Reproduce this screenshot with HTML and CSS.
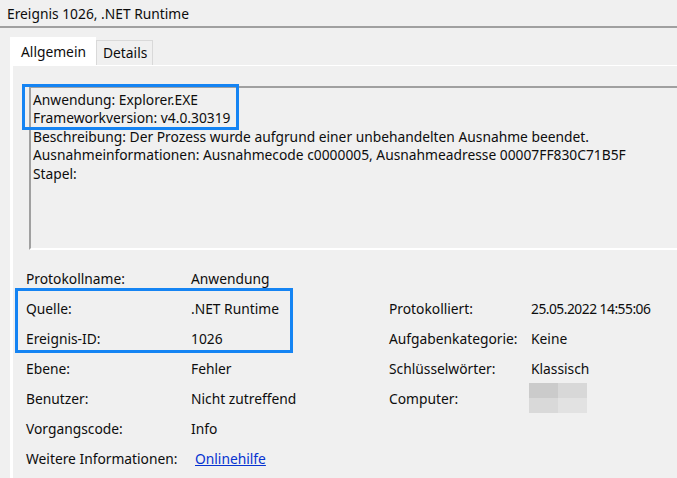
FILE: index.html
```html
<!DOCTYPE html>
<html lang="de">
<head>
  <meta charset="UTF-8">
  <title>Ereignis 1026, .NET Runtime</title>
  <link rel="stylesheet" href="styles.css">
</head>
<body>
  <div class="window">
    <div class="title">Ereignis 1026, .NET Runtime</div>

    <div class="tabs">
      <div class="tab active">Allgemein</div>
      <div class="tab">Details</div>
    </div>

    <div class="panel">
      <!-- Beschreibungsfeld -->
      <div class="desc">
        <div>Anwendung: Explorer.EXE</div>
        <div>Frameworkversion: v4.0.30319</div>
        <div>Beschreibung: Der Prozess wurde aufgrund einer unbehandelten Ausnahme beendet.</div>
        <div>Ausnahmeinformationen: Ausnahmecode c0000005, Ausnahmeadresse 00007FF830C71B5F</div>
        <div>Stapel:</div>
      </div>

      <!-- Eigenschaften -->
      <div class="props">
        <span>Protokollname:</span><span>Anwendung</span><span></span><span></span>
        <span>Quelle:</span><span>.NET Runtime</span><span>Protokolliert:</span><span class="date">25.05.2022 14:55:06</span>
        <span>Ereignis-ID:</span><span>1026</span><span>Aufgabenkategorie:</span><span>Keine</span>
        <span>Ebene:</span><span>Fehler</span><span>Schlüsselwörter:</span><span>Klassisch</span>
        <span>Benutzer:</span><span>Nicht zutreffend</span><span>Computer:</span>
        <span class="masked"><i></i><i></i><i></i><i></i></span>
        <span>Vorgangscode:</span><span>Info</span><span></span><span></span>
        <span>Weitere Informationen:</span><span><a href="#" class="link">Onlinehilfe</a></span><span></span><span></span>
      </div>
    </div>

    <!-- Markierungen -->
    <div class="mark mark-desc"></div>
    <div class="mark mark-src"></div>
  </div>
</body>
</html>
```

FILE: styles.css
```css
body { margin:0; background:#f0f0f0; overflow:hidden; }
.window { position:relative; width:677px; height:478px; overflow:hidden; font-family:"Noto Sans", sans-serif; font-size:13.8px; color:#0d0d0d; }

.title { height:26px; line-height:27px; padding-left:7px; border-bottom:2px solid #a0a0a0; }

.tabs { display:flex; align-items:flex-end; margin:9px 0 0 10px; height:28px; }
.tab { box-sizing:border-box; height:25px; line-height:24px; padding-left:6px; width:57px; border:1px solid #d9d9d9; border-bottom:none; background:#f0f0f0; }
.tab.active { height:28px; width:86px; line-height:28px; padding-left:10px; background:#fff; border-color:#fff; }

.panel { margin-left:10px; border-top:1px solid #fff; border-left:3px solid #fff; padding-top:20px; height:420px; }

.desc { box-sizing:border-box; margin-left:16px; width:700px; height:164px; padding:3px 2px; line-height:18.4px;
        border:2px solid; border-color:#a0a0a0 #fff #fff #a0a0a0; white-space:nowrap; }

.props { display:grid; grid-template-columns:165px 198px 142px 1fr; grid-auto-rows:30px; align-items:center; margin:13px 0 0 13px; white-space:nowrap; }
.date { letter-spacing:-0.5px; }
.link { color:#0633d1; margin-left:4px; }

.masked { display:grid; grid-template-columns:29px 29px; grid-template-rows:15px 15px; width:58px; margin-left:-2px; }
.masked i:nth-child(1) { background:#cbcbcb; }
.masked i:nth-child(2) { background:#d8d8d8; }
.masked i:nth-child(3) { background:#d9d9d9; }
.masked i:nth-child(4) { background:#e2e2e2; }

.mark { position:absolute; border:3px solid #1584f3; box-sizing:border-box; }
.mark-desc { left:22px; top:84px; width:217px; height:46px; }
.mark-src { left:15px; top:288px; width:278px; height:65px; }
```
